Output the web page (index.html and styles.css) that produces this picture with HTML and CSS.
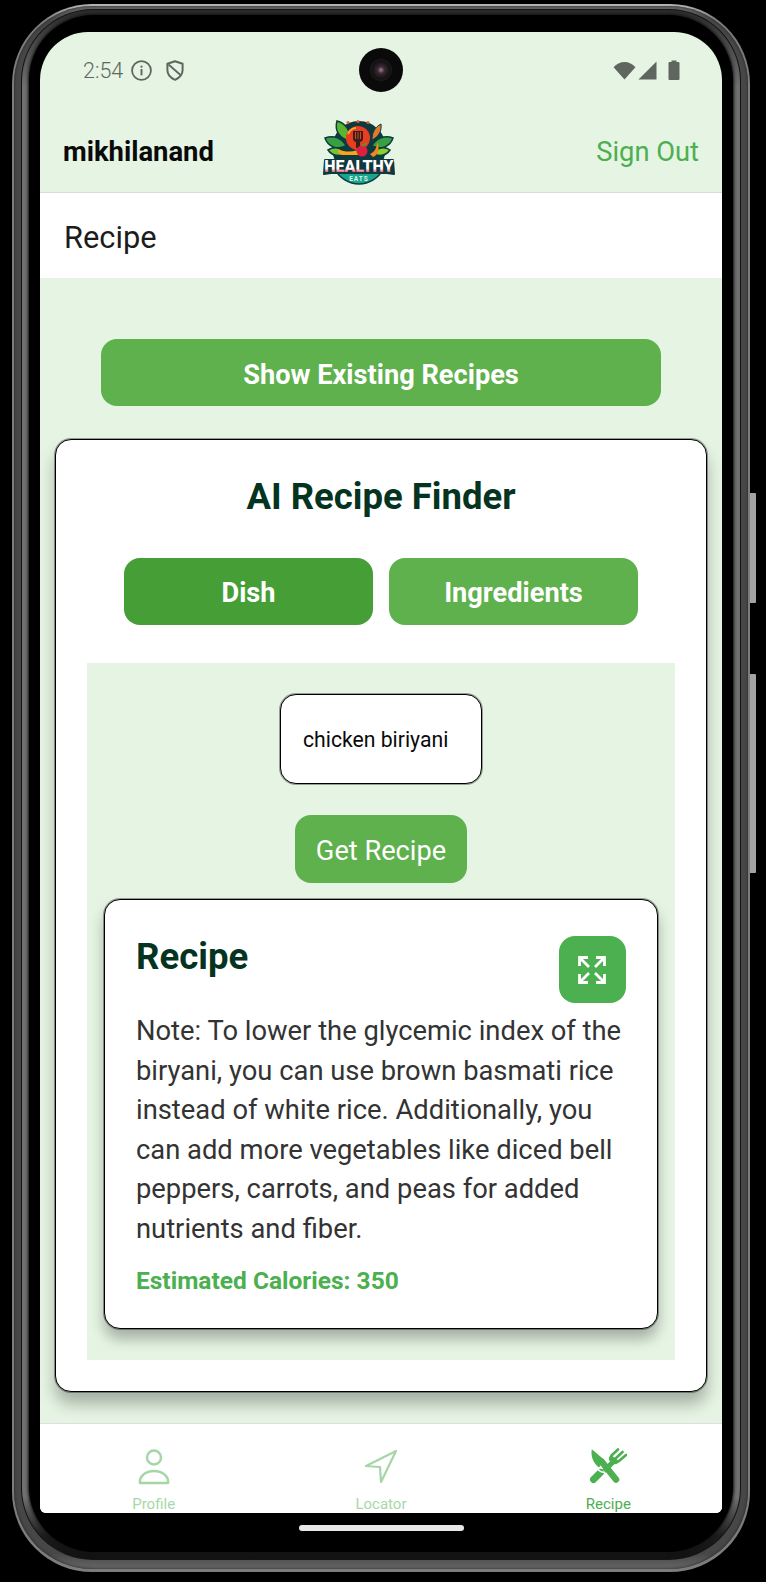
FILE: index.html
```html
<!DOCTYPE html>
<html lang="en">
<head>
<meta charset="utf-8">
<title>Healthy Eats - Recipe</title>
<link rel="stylesheet" href="styles.css">
</head>
<body>
<div class="phone">
  <span class="side-btn side-btn-a"></span>
  <span class="side-btn side-btn-b"></span>
  <div class="band-outer">
    <div class="band-line">
      <div class="band-inner">
        <div class="bezel">
          <div class="screen">
            <span class="camera"><span class="lens"></span></span>
            <header class="top">
              <div class="status">
                <div class="status-left">
                  <span class="clock">2:54</span>
                  <svg class="ic-info" viewBox="0 0 20 20"><circle cx="10" cy="10" r="9" fill="none" stroke="#5f6660" stroke-width="1.7"/><rect x="9.1" y="8.6" width="1.8" height="6" fill="#5f6660"/><rect x="9.1" y="5.4" width="1.8" height="1.9" fill="#5f6660"/></svg>
                  <svg class="ic-shield" viewBox="0 0 18 21"><path d="M9 1.200 16.600 3.800V10C16.600 14.400 13.600 17.800 9 19.800 4.400 17.800 1.400 14.400 1.400 10V3.800Z" fill="none" stroke="#5f6660" stroke-width="2" stroke-linejoin="round"/><path d="M2.500 4.500 14.500 15" stroke="#5f6660" stroke-width="1.800"/></svg>
                </div>
                <div class="status-right">
                  <svg class="ic-wifi" viewBox="0 0 24 20"><path d="M0.500 6.600C3.500 3 7.500 1 12 1s8.500 2 11.500 5.600L12 19.500Z" fill="#5f6660"/></svg>
                  <svg class="ic-signal" viewBox="0 0 20 20"><path d="M19.500 0.500V19.500H0.500Z" fill="#5f6660"/></svg>
                  <svg class="ic-batt" viewBox="0 0 12 20"><path d="M3.500 0.500h5v1.500h2a1 1 0 0 1 1 1v16a1 1 0 0 1-1 1h-9a1 1 0 0 1-1-1v-16a1 1 0 0 1 1-1h2Z" fill="#5f6660"/></svg>
                </div>
              </div>
              <div class="appbar">
                <span class="username">mikhilanand</span>
                <svg class="logo" viewBox="0 0 72 66">
                  <defs>
                    <linearGradient id="logoInk" x1="0" y1="0" x2="0" y2="1">
                      <stop offset="0" stop-color="#fff"/>
                      <stop offset=".6" stop-color="#fff"/>
                      <stop offset=".85" stop-color="#e8264f"/>
                      <stop offset="1" stop-color="#e8264f"/>
                    </linearGradient>
                  </defs>
                  <circle cx="36" cy="29" r="27" fill="#0d3a3f"/>
                  <path d="M14 2c8 2 14 9 13 20C17 20 11 12 14 2Z" fill="#5cb52f" stroke="#0d3a3f" stroke-width="1.500"/>
                  <path d="M2 19c9-3 17 0 21 8-9 4-18 1-21-8Z" fill="#36a043" stroke="#0d3a3f" stroke-width="1.500"/>
                  <path d="M5 31c7-4 13-2 16 3-4 4-12 3-16-3Z" fill="#76c432" stroke="#0d3a3f" stroke-width="1.500"/>
                  <path d="M70 19c-8-3-17 0-21 8 9 4 18 1 21-8Z" fill="#36a043" stroke="#0d3a3f" stroke-width="1.500"/>
                  <path d="M67 31c-6-4-13-2-16 3 4 4 12 3 16-3Z" fill="#8bd030" stroke="#0d3a3f" stroke-width="1.500"/>
                  <path d="M58 5c-6 3-9 8-9 16 6-3 10-8 9-16Z" fill="#e07a2c" stroke="#0d3a3f" stroke-width="1"/>
                  <circle cx="35" cy="19" r="12" fill="#ea3d1f"/>
                  <path d="M25 15c2-4 5-6 8-6" stroke="#f7a33a" stroke-width="2" fill="none"/>
                  <path d="M30 12h10v8c0 2-2 3-3 3v6h-4v-6c-1 0-3-1-3-3Z" fill="#33231f"/>
                  <path d="M32.500 13v7M35 13v7M37.500 13v7" stroke="#ea3d1f" stroke-width="1"/>
                  <path d="M15 30c8 4 18 3 24-1l1 7H19c-3 0-4-3-4-6Z" fill="#f9a51c"/>
                  <path d="M47 35c5-2 7-7 7-12 3 5 2 13-4 15Z" fill="#f5851d"/>
                  <circle cx="39" cy="32" r="5.500" fill="#dd1f42"/>
                  <path d="M39 27l5-3" stroke="#4d9f2c" stroke-width="1.500"/>
                  <circle cx="25" cy="3.500" r="1.500" fill="#e85d2a"/><circle cx="35" cy="2.500" r="1.500" fill="#e85d2a"/><circle cx="45" cy="3.500" r="1.500" fill="#e85d2a"/>
                  <path d="M12 50h48c-4 9-14 15-24 15S16 59 12 50Z" fill="#19a58c" stroke="#0d3a3f" stroke-width="1.500"/>
                  <path d="M2 41h68l1 14-7-1H8l-7 1Z" fill="#0d3a3f" stroke="#0d3a3f" stroke-width="2" stroke-linejoin="round"/>
                  <text class="logo-big" x="36" y="53" text-anchor="middle" fill="url(#logoInk)">HEALTHY</text>
                  <text class="logo-small" x="36" y="62" text-anchor="middle">EATS</text>
                </svg>
                <span class="signout">Sign Out</span>
              </div>
            </header>
            <div class="titlebar">Recipe</div>
            <main class="main">
              <button class="btn btn-wide">Show Existing Recipes</button>
              <section class="card">
                <h1 class="card-title">AI Recipe Finder</h1>
                <div class="tabs">
                  <button class="btn tab tab-on">Dish</button>
                  <button class="btn tab">Ingredients</button>
                </div>
                <div class="panel">
                  <div class="input">chicken biriyani</div>
                  <button class="btn btn-get">Get Recipe</button>
                  <article class="result">
                    <div class="result-head">
                      <h2 class="result-title">Recipe</h2>
                      <span class="expand">
                        <svg class="ic-expand" viewBox="0 0 28 28" fill="none" stroke="#fff" stroke-width="2.800"><path d="M1.500 10V1.500H10M1.500 1.500 11 11M18 1.500h8.500V10M26.500 1.500 17 11M1.500 18v8.500H10M1.500 26.500 11 17M26.500 18v8.500H18M26.500 26.500 17 17"/></svg>
                      </span>
                    </div>
                    <p class="result-text">Note: To lower the glycemic index of the biryani, you can use brown basmati rice instead of white rice. Additionally, you can add more vegetables like diced bell peppers, carrots, and peas for added nutrients and fiber.</p>
                    <p class="calories">Estimated Calories: 350</p>
                  </article>
                </div>
              </section>
            </main>
            <nav class="nav">
              <div class="nav-item">
                <svg class="nav-ic" viewBox="0 0 38 38" fill="none" stroke="#4caf50" stroke-width="2.500"><circle cx="19" cy="9.500" r="7"/><path d="M5 35c-1-7 6-12 14-12s15 5 14 12Z" stroke-linejoin="round"/></svg>
                <span>Profile</span>
              </div>
              <div class="nav-item">
                <svg class="nav-ic" viewBox="0 0 38 38" fill="none" stroke="#4caf50" stroke-width="2.200" stroke-linejoin="round"><path d="M34 3 4 18l14 1 1 15Z"/></svg>
                <span>Locator</span>
              </div>
              <div class="nav-item nav-on">
                <svg class="nav-ic" viewBox="0 0 38 38" fill="none" stroke="#4caf50" stroke-linecap="round">
                  <path d="M2.800 1.300 15.500 12 10 19.500C4 15 1.500 8 2.800 1.300Z" fill="#4caf50" stroke="none"/>
                  <path d="M13 14 27 31.500" stroke-width="6.500"/>
                  <path d="M4.500 31.500 11.500 24.500" stroke-width="7"/>
                  <path d="M8.500 21Q12 25 16.500 24" stroke="#fff" stroke-width="1.500"/>
                  <path d="M15 23 25 13" stroke-width="5" stroke-linecap="butt"/>
                  <path d="M22 7 30.500 13.500C28 17 24.500 17 21.500 14 19 11.500 19.500 9 22 7Z" fill="#4caf50" stroke="none"/>
                  <path d="M29 1.500 22.500 7.500M33.500 4 26.500 10.500M37 7 30 13" stroke-width="2.600"/>
                </svg>
                <span>Recipe</span>
              </div>
            </nav>
          </div>
          <div class="home-row"><span class="home"></span></div>
        </div>
      </div>
    </div>
  </div>
</div>
</body>
</html>
```

FILE: styles.css
```css
* { box-sizing: border-box; }
html, body { margin: 0; padding: 0; }
body { width: 766px; height: 1582px; background: #000; font-family: Roboto, "Liberation Sans", sans-serif; overflow: hidden; }
button { font-family: inherit; border: 0; padding: 0; }
h1, h2, p { margin: 0; }

.phone { position: relative; width: 738px; height: 1568px; margin: 4px 0 0 12px; padding: 2px 2px 3px; border-radius: 80px; background: linear-gradient(180deg, #b5b5b5 0, #7c7c7c 1%, #7c7c7c 100%); }
.side-btn { position: absolute; left: 738px; width: 6px; background: #a3a3a3; border-radius: 0 1px 1px 0; }
.side-btn-a { top: 489px; height: 110px; }
.side-btn-b { top: 670px; height: 199px; }
.band-outer { height: 100%; padding: 3px 7px 9px; border-radius: 78px; background: linear-gradient(180deg, #6a6a6a 0, #474747 1%, #474747 99%, #666 100%); box-shadow: inset 0 0 3px #1f1f1f; }
.band-line { height: 100%; padding: 1px; border-radius: 72px; background: #141414; }
.band-inner { height: 100%; padding: 5px 7px 7px; border-radius: 71px; background: linear-gradient(180deg, #2a2a2a 0, #707070 5%, #707070 96%, #1c1c1c 98.500%, #111 100%); }
.bezel { height: 100%; padding: 17px 11px 0; border-radius: 65px; background: #000; box-shadow: 0 0 3px 1px #111; }

.screen { position: relative; height: 1481px; border-radius: 48px 48px 6px 6px; overflow: hidden; background: #e5f4e3; display: flex; flex-direction: column; }
.camera { position: absolute; left: 319px; top: 16px; width: 44px; height: 44px; border-radius: 50%; background: #0a0a0a; display: flex; align-items: center; justify-content: center; }
.lens { width: 22px; height: 22px; border-radius: 50%; background: radial-gradient(circle, #a87a9a 0, #3a2a36 22%, #121212 55%, #2a2a2a 100%); }

.top { height: 160px; flex: none; }
.status { height: 76px; display: flex; justify-content: space-between; align-items: center; padding: 0 42px 0 43px; }
.status-left, .status-right { display: flex; align-items: center; }
.clock { font-size: 21.500px; font-weight: 300; color: #5f6660; width: 48px; }
.ic-info { width: 21px; height: 21px; }
.ic-shield { width: 18px; height: 21px; margin-left: 14px; }
.ic-wifi { width: 23px; height: 19px; }
.ic-signal { width: 19px; height: 19px; margin-left: 2px; }
.ic-batt { width: 12px; height: 20px; margin-left: 11px; }
.appbar { height: 84px; display: flex; align-items: center; padding: 3px 23px 0 23px; }
.username { font-size: 27.400px; font-weight: 700; color: #0a0a0a; width: 260px; }
.logo { width: 72px; height: 66px; flex: none; }
.logo-big { font-family: Roboto, sans-serif; font-size: 16px; font-weight: 900; }
.logo-small { font-family: Roboto, sans-serif; font-size: 6.500px; font-weight: 700; fill: #d8f5ea; letter-spacing: 1px; }
.signout { font-size: 27.300px; color: #4caf50; margin-left: auto; }

.titlebar { flex: none; height: 86px; padding: 3px 0 0 24px; background: #fff; border-top: 1px solid #dcdcdc; display: flex; align-items: center; font-size: 30.800px; font-weight: 450; color: #1c1c1c; }

.main { flex: 1; min-height: 0; padding-top: 61px; display: flex; flex-direction: column; align-items: center; }
.btn { background: #5eb14c; color: #fff; font-size: 27.200px; font-weight: 700; border-radius: 16px; padding-top: 3px; }
.btn-wide { width: 560px; height: 67px; flex: none; padding-top: 4px; }
.card { flex: none; width: 652px; height: 953px; margin-top: 33px; padding: 0 31px; background: #fff; border: 1px solid #000; border-radius: 16px; box-shadow: 0 0 0 1px rgba(0, 0, 0, .35), 0 12px 16px rgba(0, 0, 0, .28); display: flex; flex-direction: column; align-items: center; }
.card-title { font-size: 36.500px; line-height: 42px; font-weight: 700; color: #04341f; margin-top: 36px; }
.tabs { display: flex; gap: 16px; margin-top: 40px; }
.tab { width: 249px; height: 67px; }
.tab-on { background: #459e36; }
.panel { width: 588px; height: 697px; margin-top: 38px; background: #e5f4e3; display: flex; flex-direction: column; align-items: center; padding-top: 31px; }
.input { width: 202px; height: 90px; background: #fff; border: 1px solid #000; border-radius: 16px; box-shadow: 0 0 0 1px rgba(0, 0, 0, .35); display: flex; align-items: center; padding: 1px 0 0 22px; font-size: 21.200px; color: #0a0a0a; }
.btn-get { width: 172px; height: 68px; margin-top: 31px; font-weight: 400; }
.result { width: 554px; height: 430px; margin-top: 16px; padding: 36px 31px 0; background: #fff; border: 1px solid #000; border-radius: 16px; box-shadow: 0 0 0 1px rgba(0, 0, 0, .35), 0 10px 14px rgba(0, 0, 0, .28); }
.result-head { display: flex; justify-content: space-between; align-items: flex-start; height: 76px; }
.result-title { font-size: 36.600px; line-height: 42px; font-weight: 700; color: #04341f; }
.expand { width: 67px; height: 67px; padding-right: 2px; border-radius: 16px; background: #4caf50; display: flex; align-items: center; justify-content: center; }
.ic-expand { width: 28px; height: 28px; }
.result-text { font-size: 27.350px; line-height: 39.600px; color: #333; }
.calories { font-size: 24.500px; font-weight: 700; color: #4caf50; margin-top: 16px; }

.nav { position: absolute; left: 0; right: 0; bottom: 0; height: 90px; background: #fff; border-top: 1px solid #dedede; display: grid; grid-template-columns: 1fr 1fr 1fr; }
.nav-item { display: flex; flex-direction: column; align-items: center; padding-top: 24px; font-size: 15px; line-height: 18px; color: #a6d8a8; }
.nav-item .nav-ic { opacity: .5; }
.nav-ic { width: 38px; height: 38px; margin-bottom: 9px; flex: none; }
.nav-on { color: #4caf50; }
.nav-item.nav-on .nav-ic { opacity: 1; }

.home-row { display: flex; justify-content: center; padding-top: 12px; }
.home { width: 165px; height: 6px; border-radius: 3px; background: #e8e8e8; }
```
